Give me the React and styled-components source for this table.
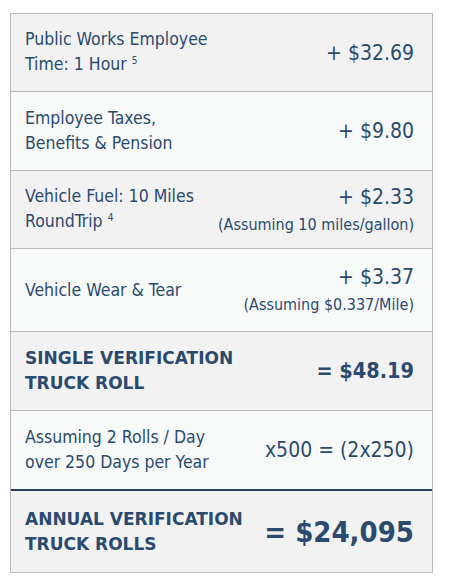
import React from 'react'
import styled, {createGlobalStyle} from 'styled-components'

const GlobalStyle = createGlobalStyle`
    body {
        margin: 0;
        background: #ffffff;
        font-family: "DejaVu Sans Condensed", "DejaVu Sans", sans-serif;
    }
`

const Table = styled.div`
    margin: 13px 0 0 10px;
    width: 421px;
    border: 1px solid #b9b9b9;
    color: #2b4a6f;
`

const Row = styled.div`
    display: flex;
    align-items: center;
    justify-content: space-between;
    height: ${props => props.h}px;
    padding: 0 18px 0 14px;
    background: ${props => props.shade ? '#f2f2f2' : '#f8f9f9'};
    border-top: ${props => props.strong ? '2px solid #2a3f5c' : '1px solid #b9b9b9'};
    &:first-child {
        border-top: none;
    }
`

const Label = styled.div`
    font-family: ${props => props.bold ? '"DejaVu Sans", sans-serif' : 'inherit'};
    font-size: ${props => props.bold ? 17 : 17.5}px;
    line-height: 25px;
    font-weight: ${props => props.bold ? 'bold' : 'normal'};
`

const Sup = styled.span`
    position: relative;
    top: -6px;
    font-size: 10px;
    margin-left: 5px;
`

const Values = styled.div`
    display: flex;
    flex-direction: column;
    align-items: flex-end;
    text-align: right;
`

const Amount = styled.div`
    font-size: ${props => props.size || 21}px;
    font-weight: ${props => props.bold ? 'bold' : 'normal'};
    line-height: 30px;
`

const Note = styled.div`
    font-size: 16px;
    line-height: 26px;
`

const rows = [
    {h: 77, shade: true, label: <>Public Works Employee<br/>Time: 1 Hour<Sup>5</Sup></>, amount: '+ $32.69'},
    {h: 78, label: <>Employee Taxes,<br/>Benefits &amp; Pension</>, amount: '+ $9.80'},
    {h: 77, shade: true, label: <>Vehicle Fuel: 10 Miles<br/>RoundTrip<Sup>4</Sup></>, amount: '+ $2.33', note: '(Assuming 10 miles/gallon)'},
    {h: 82, label: <>Vehicle Wear &amp; Tear</>, amount: '+ $3.37', note: '(Assuming $0.337/Mile)'},
    {h: 78, shade: true, bold: true, label: <>SINGLE VERIFICATION<br/>TRUCK ROLL</>, amount: '= $48.19', size: 21.5},
    {h: 78, label: <>Assuming 2 Rolls / Day<br/>over 250 Days per Year</>, amount: 'x500 = (2x250)'},
    {h: 81, shade: true, bold: true, strong: true, label: <>ANNUAL VERIFICATION<br/>TRUCK ROLLS</>, amount: '= $24,095', size: 29},
]

const App = () => {
    return (
        <>
            <GlobalStyle />
            <Table>
                {rows.map((r, i) => (
                    <Row key={i} h={r.h} shade={r.shade} strong={r.strong}>
                        <Label bold={r.bold}>{r.label}</Label>
                        <Values>
                            <Amount size={r.size} bold={r.bold}>{r.amount}</Amount>
                            {r.note && <Note>{r.note}</Note>}
                        </Values>
                    </Row>
                ))}
            </Table>
        </>
    )
}

export default App
